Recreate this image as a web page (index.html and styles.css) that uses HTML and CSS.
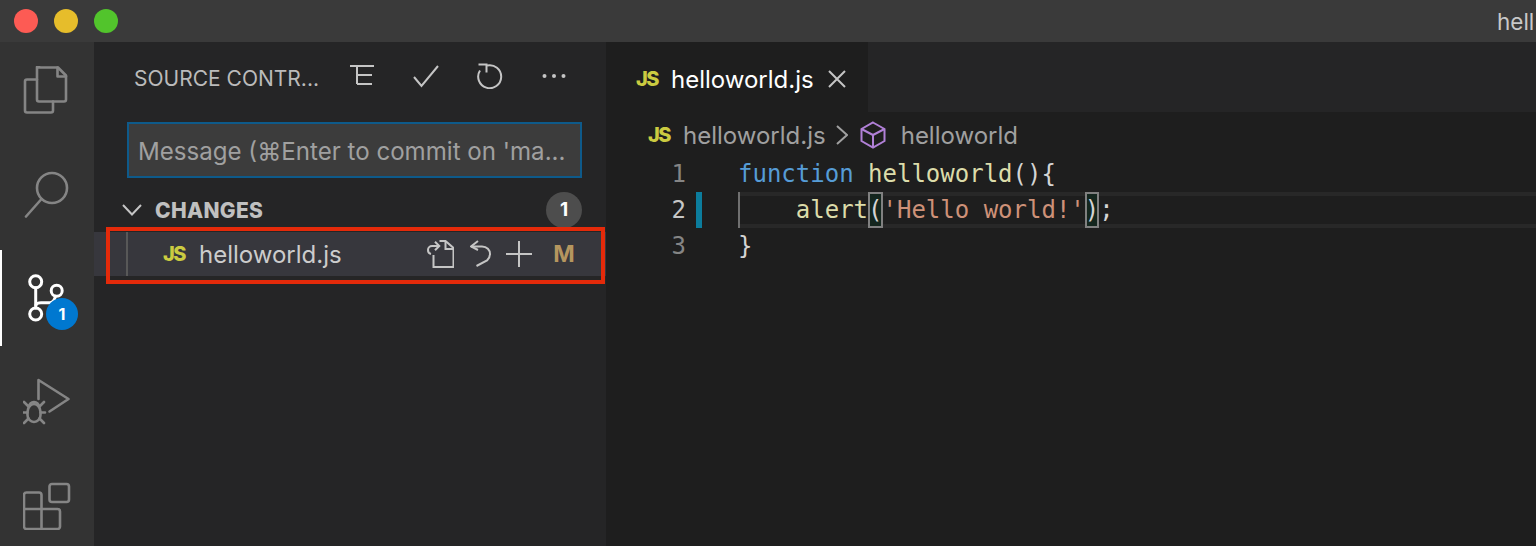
FILE: index.html
```html
<!DOCTYPE html>
<html lang="en">
<head>
<meta charset="utf-8">
<title>helloworld.js</title>
<link rel="stylesheet" href="styles.css">
</head>
<body>
<div class="window">
  <header class="titlebar">
    <div class="lights">
      <span class="light red"></span>
      <span class="light yellow"></span>
      <span class="light green"></span>
    </div>
    <div class="title">hell</div>
  </header>
  <div class="main">
    <nav class="activity">
      <div class="act-item">
        <svg class="act-icon" viewBox="0 0 48 48"><path d="M16 1.500h19l8 8v24a2 2 0 0 1-2 2H16a2 2 0 0 1-2-2v-32a2 2 0 0 1 2-2z"/><path d="M34.500 1.500v9h8.500"/><path d="M14 13.500H4a2 2 0 0 0-2 2v29a2 2 0 0 0 2 2h24a2 2 0 0 0 2-2v-9"/></svg>
      </div>
      <div class="act-item">
        <svg class="act-icon" viewBox="0 0 48 48"><circle cx="29" cy="18" r="15"/><path d="M18.500 29 3 46.500"/></svg>
      </div>
      <div class="act-item active">
        <svg class="act-icon scm" viewBox="0 0 48 48"><circle cx="12.700" cy="7.700" r="6"/><circle cx="33.700" cy="16.700" r="5.500"/><circle cx="12.700" cy="40" r="6"/><path d="M12.700 13.700v20.300"/><path d="M13 31q1-2.300 5-2.300h9q4 0 5.500-6.500"/></svg>
        <span class="act-badge">1</span>
      </div>
      <div class="act-item">
        <svg class="act-icon" viewBox="0 0 48 48"><path d="M15.500 21V2l30 19-19 12.500"/><path d="M4.500 34a6.500 8 0 0 1 13 0v3a6.500 7 0 0 1-13 0z"/><path d="M6 29a5 5 0 0 1 10 0"/><path d="M1 24l4.500 4.500M21 24l-4.500 4.500M0 34.500h4.500M17.500 34.500H22M1 45l4.500-4.500M21 45l-4.500-4.500"/></svg>
      </div>
      <div class="act-item">
        <svg class="act-icon" viewBox="0 0 48 48"><rect x="26.500" y="2" width="19.500" height="18" rx="2.500"/><path d="M18.500 27V13a2.500 2.500 0 0 0-2.500-2.500H3.500A2.500 2.500 0 0 0 1 13v31.500A2.500 2.500 0 0 0 3.500 47h31a2.500 2.500 0 0 0 2.500-2.500V29.500a2.500 2.500 0 0 0-2.500-2.500H1M18.500 27v20"/></svg>
      </div>
    </nav>
    <aside class="sidebar">
      <div class="side-head">
        <span class="side-title">SOURCE CONTR...</span>
        <div class="side-actions">
          <svg class="tool" viewBox="0 0 26 26"><path d="M1 3h24M8 3v18M8 12h15M8 21h15"/></svg>
          <svg class="tool" viewBox="0 0 26 26"><path d="M1 14l7.500 9L25 3"/></svg>
          <svg class="tool" viewBox="0 0 26 26"><path d="M10 2.500a11.500 11.500 0 1 1-7 5"/><path d="M1.500 1.500h8v8"/></svg>
          <svg class="tool" viewBox="0 0 26 26"><circle class="solid" cx="3.500" cy="13" r="2"/><circle class="solid" cx="13" cy="13" r="2"/><circle class="solid" cx="22.500" cy="13" r="2"/></svg>
        </div>
      </div>
      <div class="commit-wrap">
        <div class="commit">Message (⌘Enter to commit on 'ma...</div>
      </div>
      <div class="group">
        <svg class="chev" viewBox="0 0 20 12"><path d="M1 1l9 9.500L19 1"/></svg>
        <span class="group-name">CHANGES</span>
        <span class="count">1</span>
      </div>
      <div class="file-row">
        <span class="guide"></span>
        <span class="js js-row">JS</span>
        <span class="file-name">helloworld.js</span>
        <div class="row-actions">
          <svg class="tool row-a" viewBox="0 0 28 28"><path d="M7.500 15v12h20V8l-8-7h-6"/><path d="M19.500 1v8h8"/><path d="M13 6H6a4 4 0 0 0-4 4 4 4 0 0 0 3 4"/><path d="M9 1.700L13.300 6 9 10.300"/></svg>
          <svg class="tool row-b" viewBox="0 0 22 28"><path d="M1 6.500h11c5 0 8 3.500 8 7.500 0 3-1.500 5-3 6.500L6.500 26"/><path d="M8 1L1 6.500 8 10"/></svg>
          <svg class="tool row-c" viewBox="0 0 26 26"><path d="M0 13h26M13 0v26"/></svg>
          <span class="status">M</span>
        </div>
        <span class="highlight"></span>
      </div>
    </aside>
    <section class="editor">
      <div class="tabs">
        <div class="tab">
          <span class="js">JS</span>
          <span class="tab-name">helloworld.js</span>
          <svg class="close" viewBox="0 0 18 18"><path d="M1 1l16 16M17 1L1 17"/></svg>
        </div>
      </div>
      <div class="crumbs">
        <span class="js">JS</span>
        <span class="crumb-file">helloworld.js</span>
        <svg class="crumb-chev" viewBox="0 0 12 20"><path d="M1 1l10 9-10 9"/></svg>
        <svg class="cube" viewBox="0 0 26 28"><path d="M13 1.500l11.500 6.500v12L13 26.500 1.500 20V8z"/><path d="M1.500 8L13 14l11.500-6M13 14v12.500"/></svg>
        <span class="crumb-sym">helloworld</span>
      </div>
      <div class="code">
        <div class="line"><span class="num">1</span><span class="gutter"></span><span class="src"><span class="kw">function</span> <span class="fn">helloworld</span>(){</span></div>
        <div class="line current"><span class="num">2</span><span class="gutter mod"></span><span class="src"><span class="indent"></span>    <span class="fn">alert</span><span class="brk">(</span><span class="str">'Hello world!'</span><span class="brk">)</span>;</span></div>
        <div class="line"><span class="num">3</span><span class="gutter"></span><span class="src">}</span></div>
      </div>
    </section>
  </div>
</div>
</body>
</html>
```
FILE: styles.css
```css
* { box-sizing: border-box; }
html, body { margin: 0; height: 100%; background: #1e1e1e; overflow: hidden; }
body { font-family: Inter, "Liberation Sans", sans-serif; color: #ccc; }
.window { display: flex; flex-direction: column; width: 1536px; height: 546px; overflow: hidden; }

.titlebar { flex: none; height: 42px; background: #3a3a3a; display: flex; align-items: center; justify-content: space-between; padding-left: 14px; }
.lights { display: flex; gap: 16px; }
.light { width: 24px; height: 24px; border-radius: 50%; }
.red { background: #fd5b54; }
.yellow { background: #e6bd2b; }
.green { background: #52c42c; }
.title { width: 39px; font-size: 22.5px; color: #c8c8c8; white-space: nowrap; }

.main { flex: 1; display: flex; min-height: 0; }

.activity { flex: none; width: 94px; background: #333; display: flex; flex-direction: column; gap: 8px; }
.act-item { position: relative; flex: none; height: 96px; display: flex; align-items: center; justify-content: center; }
.act-item.active { border-left: 2px solid #fff; padding-right: 2px; }
.act-icon { width: 48px; height: 48px; fill: none; stroke: #858585; stroke-width: 2.6; stroke-linecap: round; stroke-linejoin: round; }
.act-icon.scm { stroke: #fff; stroke-width: 3; }
.act-badge { position: absolute; left: 44px; top: 48px; width: 32px; height: 32px; border-radius: 50%; background: #0078d0; color: #fff; font-size: 16px; font-weight: 700; line-height: 32px; text-align: center; }

.sidebar { flex: none; width: 512px; background: #252526; display: flex; flex-direction: column; }
.side-head { flex: none; height: 72px; display: flex; align-items: center; padding-left: 40px; }
.side-title { width: 187px; font-size: 21px; color: #bbb; white-space: nowrap; }
.side-actions { display: flex; align-items: center; gap: 38px; margin: -4px 0 0 28px; }
.tool { width: 26px; height: 26px; fill: none; stroke: #c5c5c5; stroke-width: 2; flex: none; }
.tool .solid { fill: #c5c5c5; stroke: none; }

.commit-wrap { flex: none; padding: 8px 24px 0 33px; }
.commit { height: 56px; border: 2px solid #0e5a8a; background: #3c3c3c; color: #a0a0a0; font-size: 24.1px; line-height: 55px; padding-left: 9px; white-space: nowrap; }

.group { flex: none; height: 44px; margin-top: 10px; display: flex; align-items: center; padding: 0 24px 0 28px; }
.chev { width: 20px; height: 12px; fill: none; stroke: #c5c5c5; stroke-width: 2; flex: none; }
.group-name { margin-left: 13px; font-size: 21px; font-weight: 800; letter-spacing: .3px; color: #c0c0c0; flex: 1; }
.count { width: 36px; height: 36px; border-radius: 50%; background: #4d4d4d; color: #fff; font-size: 19px; font-weight: 700; line-height: 36px; text-align: center; }

.file-row { position: relative; flex: none; height: 44px; background: #37373d; display: flex; align-items: center; padding-left: 69px; }
.guide { position: absolute; left: 32px; top: 0; bottom: 0; width: 2px; background: #585858; }
.js { font-size: 20px; font-weight: 800; color: #cbcb41; flex: none; letter-spacing: -1.5px; }
.file-name { margin-left: 14px; font-size: 24px; color: #ccc; flex: 1; }
.row-actions { display: flex; align-items: center; }
.row-a { width: 28px; height: 28px; }
.row-b { width: 22px; height: 28px; margin-left: 16px; }
.row-c { width: 26px; height: 26px; margin-left: 14px; }
.status { width: 22px; margin: 0 31px 0 21px; font-size: 23px; font-weight: 700; color: #b5965f; text-align: center; }
.highlight { position: absolute; left: 12px; right: 1px; top: -5px; bottom: -8px; border: 4px solid #e42a0a; }

.editor { flex: 1; min-width: 0; background: #1e1e1e; display: flex; flex-direction: column; }
.tabs { flex: none; height: 70px; background: #252526; display: flex; }
.tab { width: 262px; background: #1e1e1e; display: flex; align-items: center; padding: 4px 0 0 30px; }
.tab-name { margin-left: 13px; font-size: 24px; color: #fff; }
.close { width: 18px; height: 18px; margin-left: 14px; fill: none; stroke: #c5c5c5; stroke-width: 2; }
.crumbs { flex: none; height: 44px; display: flex; align-items: center; padding: 2px 0 0 42px; color: #a0a0a0; font-size: 24px; }
.crumb-file { margin-left: 13px; }
.crumb-chev { width: 12px; height: 20px; margin-left: 10px; fill: none; stroke: #a0a0a0; stroke-width: 2; }
.cube { width: 26px; height: 28px; margin-left: 12px; fill: none; stroke: #b180d7; stroke-width: 2; }
.crumb-sym { margin-left: 15px; }

.code { font-family: "DejaVu Sans Mono", "Liberation Mono", monospace; font-size: 24px; color: #d4d4d4; }
.line { display: flex; height: 36px; line-height: 36px; }
.num { flex: none; width: 80px; text-align: right; color: #858585; }
.current .num { color: #c6c6c6; }
.gutter { flex: none; width: 6px; margin: 0 36px 0 10px; }
.mod { background: #0c7d9d; }
.src { position: relative; flex: 1; white-space: pre; }
.current .src { border-top: 4px solid #282828; border-bottom: 4px solid #282828; line-height: 28px; }
.indent { position: absolute; left: 0; top: -4px; bottom: -4px; width: 2px; background: #707070; }
.kw { color: #569cd6; }
.fn { color: #dcdcaa; }
.str { color: #ce9178; }
.brk { display: inline-block; height: 36px; margin: -4px 0; vertical-align: top; line-height: 36px; outline: 2px solid #808080; outline-offset: -2px; background: #14261e; }
```
